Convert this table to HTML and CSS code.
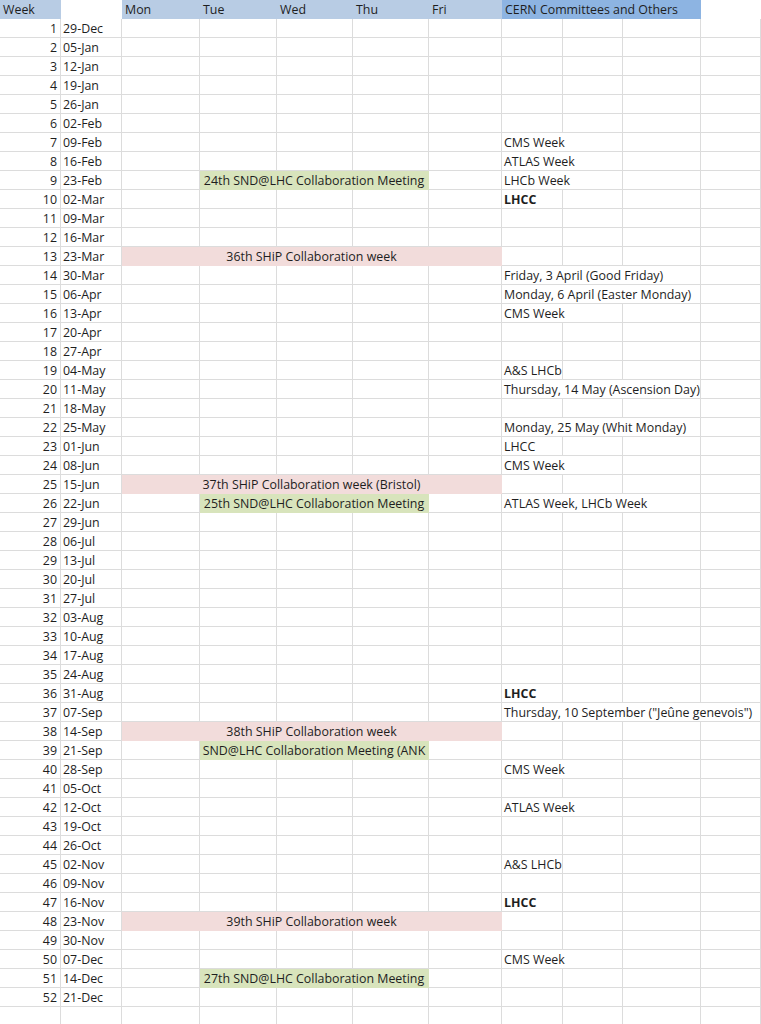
FILE: index.html
```html
<!DOCTYPE html>
<html>
<head>
<meta charset="utf-8">
<link rel="stylesheet" href="styles.css">
</head>
<body>
<div class="sheet">
<div class="row head"><span class="hb">Week</span><span class="hw"></span><span class="hb">Mon</span><span class="hb">Tue</span><span class="hb">Wed</span><span class="hb">Thu</span><span class="hb">Fri</span><span class="hd">CERN Committees and Others</span><span class="hw"></span></div>
<div class="row"><span class="n">1</span><span>29-Dec</span><span></span><span></span><span></span><span></span><span></span><span></span><span></span><span></span><span></span></div>
<div class="row"><span class="n">2</span><span>05-Jan</span><span></span><span></span><span></span><span></span><span></span><span></span><span></span><span></span><span></span></div>
<div class="row"><span class="n">3</span><span>12-Jan</span><span></span><span></span><span></span><span></span><span></span><span></span><span></span><span></span><span></span></div>
<div class="row"><span class="n">4</span><span>19-Jan</span><span></span><span></span><span></span><span></span><span></span><span></span><span></span><span></span><span></span></div>
<div class="row"><span class="n">5</span><span>26-Jan</span><span></span><span></span><span></span><span></span><span></span><span></span><span></span><span></span><span></span></div>
<div class="row"><span class="n">6</span><span>02-Feb</span><span></span><span></span><span></span><span></span><span></span><span></span><span></span><span></span><span></span></div>
<div class="row"><span class="n">7</span><span>09-Feb</span><span></span><span></span><span></span><span></span><span></span><span class="s2">CMS Week</span><span></span><span></span></div>
<div class="row"><span class="n">8</span><span>16-Feb</span><span></span><span></span><span></span><span></span><span></span><span class="s2">ATLAS Week</span><span></span><span></span></div>
<div class="row"><span class="n">9</span><span>23-Feb</span><span></span><span class="g">24th SND@LHC Collaboration Meeting</span><span></span><span class="s2">LHCb Week</span><span></span><span></span></div>
<div class="row"><span class="n">10</span><span>02-Mar</span><span></span><span></span><span></span><span></span><span></span><span class="b">LHCC</span><span></span><span></span><span></span></div>
<div class="row"><span class="n">11</span><span>09-Mar</span><span></span><span></span><span></span><span></span><span></span><span></span><span></span><span></span><span></span></div>
<div class="row"><span class="n">12</span><span>16-Mar</span><span></span><span></span><span></span><span></span><span></span><span></span><span></span><span></span><span></span></div>
<div class="row"><span class="n">13</span><span>23-Mar</span><span class="p">36th SHiP Collaboration week</span><span></span><span></span><span></span><span></span></div>
<div class="row"><span class="n">14</span><span>30-Mar</span><span></span><span></span><span></span><span></span><span></span><span class="s3">Friday, 3 April (Good Friday)</span><span></span></div>
<div class="row"><span class="n">15</span><span>06-Apr</span><span></span><span></span><span></span><span></span><span></span><span class="s3">Monday, 6 April (Easter Monday)</span><span></span></div>
<div class="row"><span class="n">16</span><span>13-Apr</span><span></span><span></span><span></span><span></span><span></span><span class="s2">CMS Week</span><span></span><span></span></div>
<div class="row"><span class="n">17</span><span>20-Apr</span><span></span><span></span><span></span><span></span><span></span><span></span><span></span><span></span><span></span></div>
<div class="row"><span class="n">18</span><span>27-Apr</span><span></span><span></span><span></span><span></span><span></span><span></span><span></span><span></span><span></span></div>
<div class="row"><span class="n">19</span><span>04-May</span><span></span><span></span><span></span><span></span><span></span><span>A&amp;S LHCb</span><span></span><span></span><span></span></div>
<div class="row"><span class="n">20</span><span>11-May</span><span></span><span></span><span></span><span></span><span></span><span class="s3">Thursday, 14 May (Ascension Day)</span><span></span></div>
<div class="row"><span class="n">21</span><span>18-May</span><span></span><span></span><span></span><span></span><span></span><span></span><span></span><span></span><span></span></div>
<div class="row"><span class="n">22</span><span>25-May</span><span></span><span></span><span></span><span></span><span></span><span class="s3">Monday, 25 May (Whit Monday)</span><span></span></div>
<div class="row"><span class="n">23</span><span>01-Jun</span><span></span><span></span><span></span><span></span><span></span><span>LHCC</span><span></span><span></span><span></span></div>
<div class="row"><span class="n">24</span><span>08-Jun</span><span></span><span></span><span></span><span></span><span></span><span class="s2">CMS Week</span><span></span><span></span></div>
<div class="row"><span class="n">25</span><span>15-Jun</span><span class="p">37th SHiP Collaboration week (Bristol)</span><span></span><span></span><span></span><span></span></div>
<div class="row"><span class="n">26</span><span>22-Jun</span><span></span><span class="g">25th SND@LHC Collaboration Meeting</span><span></span><span class="s3">ATLAS Week, LHCb Week</span><span></span></div>
<div class="row"><span class="n">27</span><span>29-Jun</span><span></span><span></span><span></span><span></span><span></span><span></span><span></span><span></span><span></span></div>
<div class="row"><span class="n">28</span><span>06-Jul</span><span></span><span></span><span></span><span></span><span></span><span></span><span></span><span></span><span></span></div>
<div class="row"><span class="n">29</span><span>13-Jul</span><span></span><span></span><span></span><span></span><span></span><span></span><span></span><span></span><span></span></div>
<div class="row"><span class="n">30</span><span>20-Jul</span><span></span><span></span><span></span><span></span><span></span><span></span><span></span><span></span><span></span></div>
<div class="row"><span class="n">31</span><span>27-Jul</span><span></span><span></span><span></span><span></span><span></span><span></span><span></span><span></span><span></span></div>
<div class="row"><span class="n">32</span><span>03-Aug</span><span></span><span></span><span></span><span></span><span></span><span></span><span></span><span></span><span></span></div>
<div class="row"><span class="n">33</span><span>10-Aug</span><span></span><span></span><span></span><span></span><span></span><span></span><span></span><span></span><span></span></div>
<div class="row"><span class="n">34</span><span>17-Aug</span><span></span><span></span><span></span><span></span><span></span><span></span><span></span><span></span><span></span></div>
<div class="row"><span class="n">35</span><span>24-Aug</span><span></span><span></span><span></span><span></span><span></span><span></span><span></span><span></span><span></span></div>
<div class="row"><span class="n">36</span><span>31-Aug</span><span></span><span></span><span></span><span></span><span></span><span class="b">LHCC</span><span></span><span></span><span></span></div>
<div class="row"><span class="n">37</span><span>07-Sep</span><span></span><span></span><span></span><span></span><span></span><span class="s4">Thursday, 10 September ("Jeûne genevois")</span></div>
<div class="row"><span class="n">38</span><span>14-Sep</span><span class="p">38th SHiP Collaboration week</span><span></span><span></span><span></span><span></span></div>
<div class="row"><span class="n">39</span><span>21-Sep</span><span></span><span class="g">SND@LHC Collaboration Meeting (ANK</span><span></span><span></span><span></span><span></span><span></span></div>
<div class="row"><span class="n">40</span><span>28-Sep</span><span></span><span></span><span></span><span></span><span></span><span class="s2">CMS Week</span><span></span><span></span></div>
<div class="row"><span class="n">41</span><span>05-Oct</span><span></span><span></span><span></span><span></span><span></span><span></span><span></span><span></span><span></span></div>
<div class="row"><span class="n">42</span><span>12-Oct</span><span></span><span></span><span></span><span></span><span></span><span class="s2">ATLAS Week</span><span></span><span></span></div>
<div class="row"><span class="n">43</span><span>19-Oct</span><span></span><span></span><span></span><span></span><span></span><span></span><span></span><span></span><span></span></div>
<div class="row"><span class="n">44</span><span>26-Oct</span><span></span><span></span><span></span><span></span><span></span><span></span><span></span><span></span><span></span></div>
<div class="row"><span class="n">45</span><span>02-Nov</span><span></span><span></span><span></span><span></span><span></span><span>A&amp;S LHCb</span><span></span><span></span><span></span></div>
<div class="row"><span class="n">46</span><span>09-Nov</span><span></span><span></span><span></span><span></span><span></span><span></span><span></span><span></span><span></span></div>
<div class="row"><span class="n">47</span><span>16-Nov</span><span></span><span></span><span></span><span></span><span></span><span class="b">LHCC</span><span></span><span></span><span></span></div>
<div class="row"><span class="n">48</span><span>23-Nov</span><span class="p">39th SHiP Collaboration week</span><span></span><span></span><span></span><span></span></div>
<div class="row"><span class="n">49</span><span>30-Nov</span><span></span><span></span><span></span><span></span><span></span><span></span><span></span><span></span><span></span></div>
<div class="row"><span class="n">50</span><span>07-Dec</span><span></span><span></span><span></span><span></span><span></span><span class="s2">CMS Week</span><span></span><span></span></div>
<div class="row"><span class="n">51</span><span>14-Dec</span><span></span><span class="g">27th SND@LHC Collaboration Meeting</span><span></span><span></span><span></span><span></span><span></span></div>
<div class="row"><span class="n">52</span><span>21-Dec</span><span></span><span></span><span></span><span></span><span></span><span></span><span></span><span></span><span></span></div>
<div class="row"><span class="n"></span><span></span><span></span><span></span><span></span><span></span><span></span><span></span><span></span><span></span><span></span></div>
</div>
</body>
</html>
```
FILE: styles.css
```css
html, body {
  margin: 0;
  padding: 0;
  background: #ffffff;
  overflow: hidden;
}
.sheet {
  font-family: "Open Sans", "Noto Sans", sans-serif;
  font-size: 12.4px;
  color: #1e1e1e;
}
.row {
  display: grid;
  grid-template-columns: 61px 61px 78px 77px 76px 76px 73px 61px 60px 78px 60px;
  grid-auto-rows: 19px;
  height: 19px;
}
.row > span {
  box-sizing: border-box;
  border-right: 1px solid #dcdcdc;
  border-bottom: 1px solid #dcdcdc;
  padding: 0 3px 0 2px;
  line-height: 20px;
  white-space: nowrap;
  overflow: hidden;
}
.row > span.n {
  text-align: right;
}
.row > span.b {
  font-weight: bold;
}
.row > span.s2 { grid-column: span 2; }
.row > span.s3 { grid-column: span 3; }
.row > span.s4 { grid-column: span 4; }
.row > span.g {
  grid-column: span 3;
  background: #d8e4bc;
  border-color: #d8e4bc;
  text-align: center;
  padding: 0;
}
.row > span.p {
  grid-column: span 5;
  background: #f2dcdb;
  border-color: #f2dcdb;
  text-align: center;
  padding: 0;
}
.head > span {
  border: none;
  line-height: 19px;
  padding-left: 3px;
}
.head > span.hb {
  background: #b8cce4;
}
.head > span.hd {
  grid-column: span 3;
  background: #8db4e2;
}
.head > span.hw {
  background: #ffffff;
}
```
